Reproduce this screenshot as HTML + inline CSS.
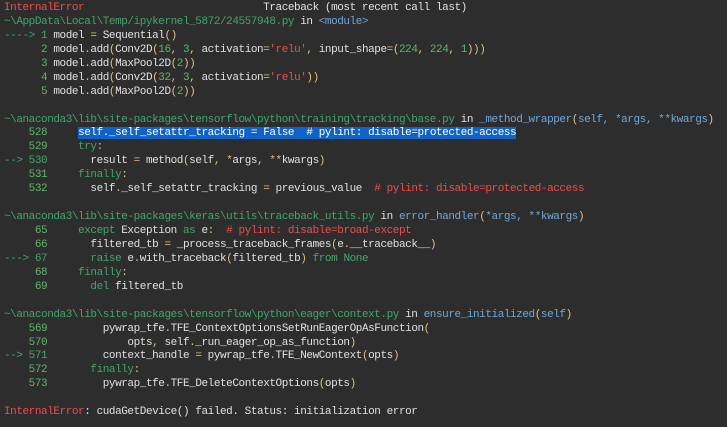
<!DOCTYPE html>
<html><head><meta charset="utf-8"><style>
html,body{margin:0;padding:0;background:#2d2d2d;width:727px;height:427px;overflow:hidden}
pre{margin:0;padding:2px 0 0 4px;font-family:"Liberation Mono",monospace;font-size:11px;letter-spacing:-0.43px;line-height:13.93px;color:#e0e0e0;white-space:pre}
.r{color:#f14c4c}.g{color:#3fa86b}.n{color:#5cb86b}.b{color:#6fa8dc}.y{color:#e5c07b}.k{color:#3fa86b}.c{color:#f14c4c}
.hl{background:#0f62c7;color:#fff}
</style></head><body><pre><span class="r">InternalError</span>                             Traceback (most recent call last)
<span class="g">~\AppData\Local\Temp/ipykernel_5872/24557948.py</span> in <span class="b">&lt;module&gt;</span>
<span class="g">----&gt; 1</span> model <span class="y">=</span> Sequential<span class="y">()</span>
<span class="n">      2</span> model<span class="y">.</span>add<span class="y">(</span>Conv2D<span class="y">(</span><span class="n">16</span><span class="y">,</span> <span class="n">3</span><span class="y">,</span> activation<span class="y">=</span><span class="c">'relu'</span><span class="y">,</span> input_shape<span class="y">=(</span><span class="n">224</span><span class="y">,</span> <span class="n">224</span><span class="y">,</span> <span class="n">1</span><span class="y">)))</span>
<span class="n">      3</span> model<span class="y">.</span>add<span class="y">(</span>MaxPool2D<span class="y">(</span><span class="n">2</span><span class="y">))</span>
<span class="n">      4</span> model<span class="y">.</span>add<span class="y">(</span>Conv2D<span class="y">(</span><span class="n">32</span><span class="y">,</span> <span class="n">3</span><span class="y">,</span> activation<span class="y">=</span><span class="c">'relu'</span><span class="y">))</span>
<span class="n">      5</span> model<span class="y">.</span>add<span class="y">(</span>MaxPool2D<span class="y">(</span><span class="n">2</span><span class="y">))</span>

<span class="g">~\anaconda3\lib\site-packages\tensorflow\python\training\tracking\base.py</span> in <span class="b">_method_wrapper<span class="y">(</span>self, *args, **kwargs<span class="y">)</span></span>
<span class="n">    528</span>     <span class="hl">self._self_setattr_tracking = False  # pylint: disable=protected-access</span>
<span class="n">    529</span>     <span class="k">try</span><span class="y">:</span>
<span class="g">--&gt; 530</span>       result <span class="y">=</span> method<span class="y">(</span>self<span class="y">,</span> <span class="y">*</span>args<span class="y">,</span> <span class="y">**</span>kwargs<span class="y">)</span>
<span class="n">    531</span>     <span class="k">finally</span><span class="y">:</span>
<span class="n">    532</span>       self<span class="y">.</span>_self_setattr_tracking <span class="y">=</span> previous_value  <span class="c"># pylint: disable=protected-access</span>

<span class="g">~\anaconda3\lib\site-packages\keras\utils\traceback_utils.py</span> in <span class="b">error_handler<span class="y">(</span>*args, **kwargs<span class="y">)</span></span>
<span class="n">     65</span>     <span class="k">except</span> Exception <span class="k">as</span> e<span class="y">:</span>  <span class="c"># pylint: disable=broad-except</span>
<span class="n">     66</span>       filtered_tb <span class="y">=</span> _process_traceback_frames<span class="y">(</span>e<span class="y">.</span>__traceback__<span class="y">)</span>
<span class="g">---&gt; 67</span>       <span class="k">raise</span> e<span class="y">.</span>with_traceback<span class="y">(</span>filtered_tb<span class="y">)</span> <span class="k">from</span> <span class="k">None</span>
<span class="n">     68</span>     <span class="k">finally</span><span class="y">:</span>
<span class="n">     69</span>       <span class="k">del</span> filtered_tb

<span class="g">~\anaconda3\lib\site-packages\tensorflow\python\eager\context.py</span> in <span class="b">ensure_initialized<span class="y">(</span>self<span class="y">)</span></span>
<span class="n">    569</span>         pywrap_tfe<span class="y">.</span>TFE_ContextOptionsSetRunEagerOpAsFunction<span class="y">(</span>
<span class="n">    570</span>             opts<span class="y">,</span> self<span class="y">.</span>_run_eager_op_as_function<span class="y">)</span>
<span class="g">--&gt; 571</span>         context_handle <span class="y">=</span> pywrap_tfe<span class="y">.</span>TFE_NewContext<span class="y">(</span>opts<span class="y">)</span>
<span class="n">    572</span>       <span class="k">finally</span><span class="y">:</span>
<span class="n">    573</span>         pywrap_tfe<span class="y">.</span>TFE_DeleteContextOptions<span class="y">(</span>opts<span class="y">)</span>

<span class="r">InternalError</span>: cudaGetDevice() failed. Status: initialization error</pre></body></html>
